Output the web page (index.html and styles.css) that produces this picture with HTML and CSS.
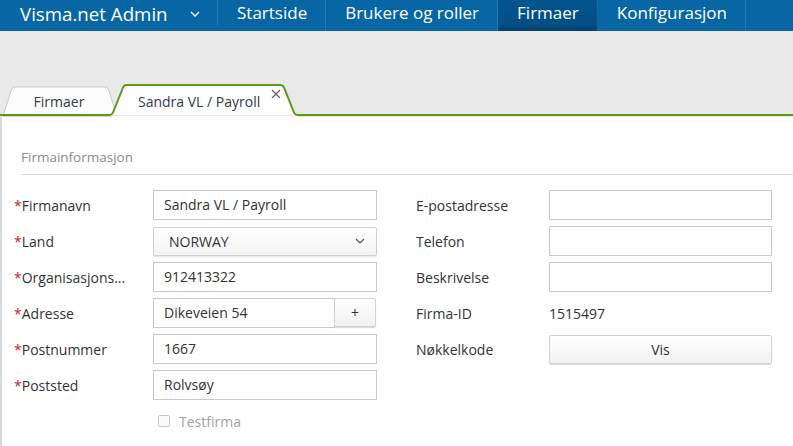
FILE: index.html
```html
<!DOCTYPE html>
<html>
<head>
    <title>Visma.net Admin - Firmaer</title>
    <link rel="stylesheet" href="styles.css">
</head>
<body>
    <div class="topbar">
        <div class="brand">
            <span class="brand-name">Visma.net Admin</span>
            <svg class="brand-caret" width="10" height="6" viewBox="0 0 10 6"><path d="M1 1 L5 5 L9 1" fill="none" stroke="#fff" stroke-width="1.3"/></svg>
        </div>
        <a class="nav-item">Startside</a>
        <a class="nav-item">Brukere og roller</a>
        <a class="nav-item active">Firmaer</a>
        <a class="nav-item">Konfigurasjon</a>
    </div>

    <div class="tab-area">
        <div class="tab-strip">
            <svg class="tab-shapes" width="793" height="34" viewBox="0 0 793 34">
                <path d="M3 33 L11.5 6.5 Q12.5 4 15.5 4 L104.5 4 Q107.5 4 108.5 6.5 L116 30 L116 33 Z" fill="#fdfdfd" stroke="#c9c9c9" stroke-width="1"/>
                <path d="M0 32 L109 32 Q112 32 113 29.5 L123 4.5 Q124 2 127 2 L280 2 Q283 2 284 4.5 L294 29.5 Q295 32 298 32 L793 32" fill="#fff" stroke="#5c9a16" stroke-width="2"/>
                <rect x="112" y="33" width="186" height="1" fill="#fff"/>
            </svg>
            <div class="tab">Firmaer</div>
            <div class="tab tab-active">
                Sandra VL / Payroll
                <svg class="tab-close" width="10" height="10" viewBox="0 0 10 10"><path d="M1 1 L9 9 M9 1 L1 9" stroke="#666" stroke-width="1.3"/></svg>
            </div>
        </div>
    </div>

    <div class="content">
        <div class="section-title">Firmainformasjon</div>
        <div class="form">
            <div class="form-col left-col">
                <div class="form-row">
                    <label class="field-label"><span class="req">*</span>Firmanavn</label>
                    <div class="input-field">Sandra VL / Payroll</div>
                </div>
                <div class="form-row">
                    <label class="field-label"><span class="req">*</span>Land</label>
                    <div class="select-field">
                        <span>NORWAY</span>
                        <svg width="10" height="6" viewBox="0 0 10 6"><path d="M1 1 L5 5 L9 1" fill="none" stroke="#555" stroke-width="1.2"/></svg>
                    </div>
                </div>
                <div class="form-row">
                    <label class="field-label"><span class="req">*</span>Organisasjons...</label>
                    <div class="input-field">912413322</div>
                </div>
                <div class="form-row">
                    <label class="field-label"><span class="req">*</span>Adresse</label>
                    <div class="input-group">
                        <div class="input-field">Dikeveien 54</div>
                        <button class="add-button">+</button>
                    </div>
                </div>
                <div class="form-row">
                    <label class="field-label"><span class="req">*</span>Postnummer</label>
                    <div class="input-field">1667</div>
                </div>
                <div class="form-row">
                    <label class="field-label"><span class="req">*</span>Poststed</label>
                    <div class="input-field">Rolvsøy</div>
                </div>
                <div class="form-row check-row">
                    <span class="checkbox"></span>
                    <span class="check-label">Testfirma</span>
                </div>
            </div>
            <div class="form-col right-col">
                <div class="form-row">
                    <label class="field-label">E-postadresse</label>
                    <div class="input-field"></div>
                </div>
                <div class="form-row">
                    <label class="field-label">Telefon</label>
                    <div class="input-field"></div>
                </div>
                <div class="form-row">
                    <label class="field-label">Beskrivelse</label>
                    <div class="input-field"></div>
                </div>
                <div class="form-row">
                    <label class="field-label">Firma-ID</label>
                    <div class="value-text">1515497</div>
                </div>
                <div class="form-row">
                    <label class="field-label">Nøkkelkode</label>
                    <button class="show-button">Vis</button>
                </div>
            </div>
        </div>
    </div>
</body>
</html>
```

FILE: styles.css
```css
body {
    font-family: "Open Sans", "Liberation Sans", sans-serif;
    background-color: #fff;
    margin: 0;
    padding: 0;
    color: #333;
    overflow: hidden;
}

.topbar {
    display: flex;
    height: 31px;
    background-color: #0866a5;
    color: #fff;
}

.brand {
    display: flex;
    align-items: center;
    width: 197px;
    height: 26px;
    padding-left: 20px;
    border-right: 1px solid rgba(255, 255, 255, 0.12);
}

.brand-name {
    font-size: 18.7px;
}

.brand-caret {
    margin-left: 22px;
    margin-top: 2px;
}

.nav-item {
    display: block;
    padding: 0 18px 0 19px;
    font-size: 17px;
    line-height: 26px;
    height: 31px;
    border-right: 1px solid rgba(255, 255, 255, 0.12);
    cursor: pointer;
}

.nav-item.active {
    background: linear-gradient(#035590, #034f86 80%, #023f6d);
}

.tab-area {
    background-color: #e9e9e9;
    height: 86px;
    display: flex;
    align-items: flex-end;
}

.tab-strip {
    position: relative;
    display: flex;
    width: 100%;
    height: 34px;
}

.tab-shapes {
    position: absolute;
    left: 0;
    top: 0;
}

.tab {
    position: relative;
    height: 34px;
    box-sizing: border-box;
    padding-top: 9px;
    font-size: 14px;
    line-height: 20px;
    color: #2f3a4a;
}

.tab:first-of-type {
    width: 112px;
    margin-left: 3px;
    text-align: center;
}

.tab-active {
    width: 182px;
    padding-left: 23px;
}

.tab-close {
    position: absolute;
    left: 156px;
    top: 6px;
}

.content {
    border-left: 2px solid #d9d9d9;
    padding-top: 31px;
    height: 298px;
}

.section-title {
    margin-left: 19px;
    padding-bottom: 8px;
    font-size: 13.5px;
    line-height: 18px;
    color: #8a8a8a;
    border-bottom: 1px solid #dedede;
}

.form {
    display: flex;
    margin: 15px 0 0 12px;
}

.form-col {
    display: flex;
    flex-direction: column;
    gap: 6px;
}

.left-col {
    width: 363px;
    margin-right: 39px;
}

.form-row {
    display: flex;
    align-items: center;
    height: 30px;
}

.field-label {
    font-size: 14px;
    white-space: nowrap;
}

.left-col .field-label {
    width: 139px;
}

.right-col .field-label {
    width: 133px;
}

.req {
    color: #c8201e;
}

.input-field {
    box-sizing: border-box;
    width: 224px;
    height: 30px;
    border: 1px solid #c9c9c9;
    padding: 0 10px;
    font-size: 14px;
    line-height: 28px;
    color: #333;
}

.right-col .input-field {
    width: 223px;
}

.select-field {
    box-sizing: border-box;
    width: 224px;
    height: 29px;
    display: flex;
    align-items: center;
    justify-content: space-between;
    padding: 0 11px 0 15px;
    font-size: 14px;
    border: 1px solid #d2d2d2;
    border-radius: 2px;
    background: linear-gradient(#fff, #f3f3f3);
    box-shadow: 0 1px 1px rgba(0, 0, 0, 0.12);
}

.input-group {
    display: flex;
    width: 224px;
}

.input-group .input-field {
    width: 182px;
}

.add-button,
.show-button {
    font-family: inherit;
    font-size: 14px;
    color: #333;
    border: 1px solid #d2d2d2;
    border-radius: 2px;
    background: linear-gradient(#fff, #f1f1f1);
    box-shadow: 0 1px 1px rgba(0, 0, 0, 0.15);
    cursor: pointer;
}

.add-button {
    width: 42px;
    height: 29px;
    margin-left: -1px;
    padding: 0;
}

.show-button {
    width: 223px;
    height: 29px;
}

.value-text {
    font-size: 14px;
}

.check-row {
    padding-left: 144px;
}

.checkbox {
    width: 10px;
    height: 10px;
    border: 1px solid #c8c8c8;
    border-radius: 2px;
    background-color: #fafafa;
}

.check-label {
    margin-left: 9px;
    font-size: 14px;
    color: #a3a3a3;
}
```
